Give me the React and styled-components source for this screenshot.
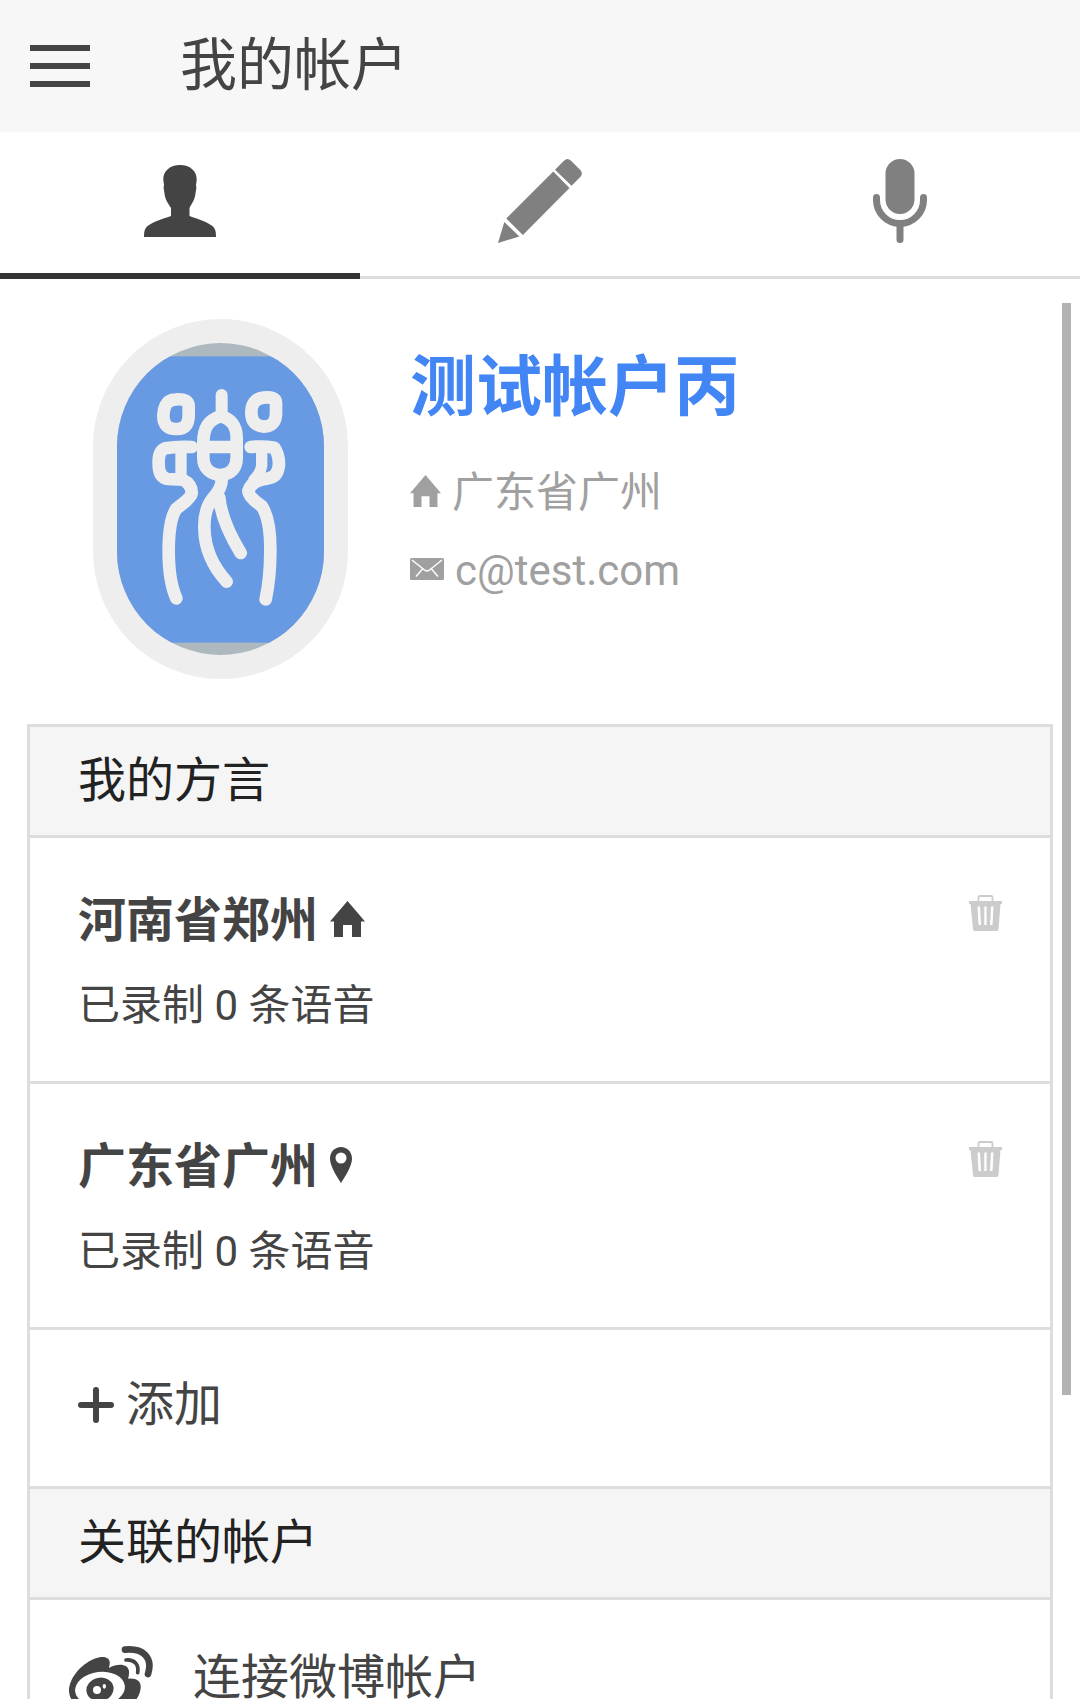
import { useState } from 'react';
import styled, { createGlobalStyle } from 'styled-components';

const dialects = [
    { id: 1, name: '河南省郑州', count: 0, type: 'home' },
    { id: 2, name: '广东省广州', count: 0, type: 'pin' },
];

export default function App(){
    const [tab, setTab] = useState('profile');

    return(
        <>
            <GlobalStyle />
            <Page>
                <Header>
                    <MenuButton aria-label="菜单">
                        <Bar />
                        <Bar />
                        <Bar />
                    </MenuButton>
                    <PageTitle>我的帐户</PageTitle>
                </Header>
                <Tabs>
                    <Tab aria-label="帐户" $active={tab === 'profile'} onClick={() => setTab('profile')}><PersonIcon /></Tab>
                    <Tab aria-label="编辑" $active={tab === 'edit'} onClick={() => setTab('edit')}><PencilIcon /></Tab>
                    <Tab aria-label="录音" $active={tab === 'record'} onClick={() => setTab('record')}><MicIcon /></Tab>
                </Tabs>
                <Content>
                    <Profile>
                        <Avatar><AvatarDrawing /></Avatar>
                        <Info>
                            <UserName>测试帐户丙</UserName>
                            <Detail><HomeIcon width="31" height="32" />广东省广州</Detail>
                            <Detail><MailIcon />c@test.com</Detail>
                        </Info>
                    </Profile>
                    <List>
                        <SectionTitle>我的方言</SectionTitle>
                        {dialects.map(dialect => <Dialect key={dialect.id} {...dialect} />)}
                        <AddButton><PlusIcon />添加</AddButton>
                        <SectionTitle>关联的帐户</SectionTitle>
                        <AccountLink href="#weibo"><WeiboIcon />连接微博帐户</AccountLink>
                    </List>
                    <ScrollThumb />
                </Content>
            </Page>
        </>
    )
}

function Dialect({ name, count, type }){
    return(
        <Item>
            <div>
                <ItemTitle>{name}{type === 'home' ? <HomeIcon width="35" height="36" /> : <PinIcon />}</ItemTitle>
                <ItemText>已录制 {count} 条语音</ItemText>
            </div>
            <DeleteButton aria-label="删除"><TrashIcon /></DeleteButton>
        </Item>
    )
}

function PersonIcon(){
    return(
        <svg width="72" height="72" viewBox="0 0 72 72" fill="currentColor">
            <path d="M36 0C46 0 53 6 52.700 15L52 20Q53 23 51.700 27C51 35 48 38 45.500 43V51C54 54 64 57 69 61.500C71.500 64 72 67 72 72H0C0 67 .5 64 3 61.500C8 57 18 54 27 51V43C24 38 21 35 20.300 27Q19 23 20 20L19.300 15C19 6 26 0 36 0Z" />
        </svg>
    )
}

function PencilIcon(){
    return(
        <svg width="84" height="84" viewBox="0 0 84 84" fill="currentColor">
            <path d="M0 84L6.300 63L21.300 77.500ZM8.300 59.500L55.300 12.500L71.500 29L24.900 76ZM57 10.700L66 1.700Q69.500-1.500 73 1.700L82.300 11Q85.500 14.500 82.300 18L73.500 26.800Z" />
        </svg>
    )
}

function MicIcon(){
    return(
        <svg width="54" height="84" viewBox="0 0 54 84">
            <rect x="12.500" width="29" height="55" rx="14.500" fill="currentColor" />
            <path d="M3.500 38.500V41C3.500 54 14 64.500 27 64.500S50.500 54 50.500 41V38.500M27 65V80.500" fill="none" stroke="currentColor" strokeWidth="7" strokeLinecap="round" />
        </svg>
    )
}

function HomeIcon(props){
    return(
        <svg viewBox="0 0 35 36" fill="currentColor" {...props}>
            <path d="M17.500 0L35 20.500H31V36H22V24H13V36H4V20.500H0Z" />
        </svg>
    )
}

function PinIcon(){
    return(
        <svg width="22" height="36" viewBox="0 0 22 36" fill="currentColor">
            <path fillRule="evenodd" d="M11 0C4.800 0 0 5 0 11.500C0 19 6.500 29 11 36C15.500 29 22 19 22 11.500C22 5 17.200 0 11 0ZM11 5.500A5.500 5.500 0 1 1 11 16.500A5.500 5.500 0 1 1 11 5.500Z" />
        </svg>
    )
}

function MailIcon(){
    return(
        <svg width="34" height="22" viewBox="0 0 34 22">
            <rect width="34" height="22" rx="1.500" fill="currentColor" />
            <path d="M2 2L14.500 12Q17 14 19.500 12L32 2M6 18.500L12.500 11M28 18.500L21.500 11" fill="none" stroke="#fff" strokeWidth="1.500" />
        </svg>
    )
}

function TrashIcon(){
    return(
        <svg width="33" height="36" viewBox="0 0 33 36" fill="currentColor">
            <path d="M9.500 6.500V2.500Q9.500 1 11 1H22Q23.500 1 23.500 2.500V6.500" fill="none" stroke="currentColor" strokeWidth="1.800" />
            <path fillRule="evenodd" d="M0 6H33V9H31.500L29.500 34Q29.300 36 28 36H5.500Q4.200 36 4 34L1.500 9H0ZM8.500 11.500L9.500 30H12L11 11.500ZM15.300 11.500V30H17.600V11.500ZM22 11.500L21 30H23.500L24.500 11.500Z" />
        </svg>
    )
}

function PlusIcon(){
    return(
        <svg width="36" height="36" viewBox="0 0 36 36">
            <path d="M18 3V33M3 18H33" stroke="currentColor" strokeWidth="6" strokeLinecap="round" />
        </svg>
    )
}

function WeiboIcon(){
    return(
        <svg width="84" height="84" viewBox="29 2 252 252" fill="currentColor">
            <path d="M29 165C30 130 62 88 105 70C137 58 154 68 151 86L149 98C175 83 207 85 209 108Q210 120 206 130C232 127 246 138 244 158C240 202 195 232 130 232C70 232 29 205 29 165Z" />
            <ellipse cx="122" cy="160" rx="75" ry="50" fill="#fff" transform="rotate(-7 122 160)" />
            <ellipse cx="122" cy="162" rx="41" ry="35" transform="rotate(-12 122 162)" />
            <circle cx="113" cy="164" r="12" fill="#fff" />
            <ellipse cx="135" cy="153" rx="5" ry="7" fill="#fff" />
            <path d="M197 43C250 38 282 65 266 116" fill="none" stroke="currentColor" strokeWidth="20" strokeLinecap="round" />
            <path d="M200 74C226 72 239 88 235 112" fill="none" stroke="currentColor" strokeWidth="11" strokeLinecap="round" />
        </svg>
    )
}

function AvatarDrawing(){
    return(
        <svg viewBox="111 126 621 936" width="207" height="312">
            <rect x="111" y="126" width="621" height="936" fill="#adb8bf" />
            <rect x="111" y="166" width="621" height="859" fill="#689ae4" />
            <g fill="none" stroke="#eee" strokeWidth="38" strokeLinecap="round" strokeLinejoin="round">
                <path d="M288 295Q326 292 326 315V345Q325 384 292 384Q250 386 250 345Q252 295 288 295Z" />
                <path d="M550 290Q588 286 588 305V340Q586 376 552 377Q514 374 514 335Q514 294 550 290Z" />
                <path strokeWidth="36" d="M425 282V345" />
                <path d="M421 346C385 358 370 380 370 425V470C370 500 390 520 421 522C455 520 470 500 470 470V410C470 375 452 352 421 346ZM385 438H455" />
                <path d="M335 438Q290 436 255 442Q234 450 236 490Q236 532 265 534L308 536Q336 550 335 577Q333 592 290 622Q266 655 266 750Q266 840 289 892" />
                <path strokeWidth="34" d="M303 448V525" />
                <path d="M512 438Q550 434 583 440Q597 460 597 490Q594 528 565 532Q515 536 505 570Q505 588 545 615Q572 655 571 750Q571 830 557 895" />
                <path strokeWidth="34" d="M545 445V495Q540 520 522 536" />
                <path d="M425 530Q428 560 398 592Q372 625 373 680Q374 770 440 842M418 590Q424 660 482 756" />
            </g>
        </svg>
    )
}

const GlobalStyle = createGlobalStyle`
    * {
        box-sizing: border-box;
    }

    body {
        margin: 0;
        background-color: #ffffff;
        color: #444444;
        font-family: Roboto, "Noto Sans CJK SC", sans-serif;
    }

    button {
        padding: 0;
        border: none;
        background: none;
        color: inherit;
        font: inherit;
        cursor: pointer;
    }

    svg {
        flex-shrink: 0;
    }
`

const Page = styled.div`
    height: 100vh;
    display: flex;
    flex-direction: column;
    overflow: hidden;
`

const Header = styled.header`
    flex-shrink: 0;
    height: 132px;
    padding: 0 30px;
    display: flex;
    align-items: center;
    gap: 90px;
    background-color: #f7f7f7;
`

const MenuButton = styled.button`
    width: 60px;
    display: flex;
    flex-direction: column;
    gap: 12px;
`

const Bar = styled.span`
    width: 100%;
    height: 6px;
    background-color: #444444;
`

const PageTitle = styled.h1`
    margin: 0;
    font-size: 57px;
    font-weight: 400;
    line-height: 72px;
`

const Tabs = styled.nav`
    flex-shrink: 0;
    height: 147px;
    display: flex;
    box-shadow: inset 0 -3px #dddddd;
`

const Tab = styled.button`
    flex: 1;
    display: flex;
    align-items: center;
    justify-content: center;
    padding-bottom: 9px;
    color: ${props => props.$active ? '#444444' : '#808080'};
    box-shadow: ${props => props.$active ? 'inset 0 -6px #333333' : 'none'};
`

const Content = styled.main`
    position: relative;
    flex: 1;
    min-height: 0;
    padding: 40px 27px 0;
    overflow: hidden;
`

const Profile = styled.section`
    display: flex;
    gap: 62px;
    padding: 0 66px 45px;
`

const Avatar = styled.div`
    flex-shrink: 0;
    width: 255px;
    height: 360px;
    border: 24px solid #eeeeee;
    border-radius: 128px;
    overflow: hidden;

    svg {
        display: block;
    }
`

const Info = styled.div`
    padding-top: 30px;
`

const UserName = styled.h2`
    margin: 0 0 36px;
    color: #4285f4;
    font-size: 66px;
    font-weight: 700;
    line-height: 78px;
`

const Detail = styled.p`
    margin: 0 0 18px;
    display: flex;
    align-items: center;
    gap: 11px;
    color: #a0a0a0;
    font-size: 42px;
    line-height: 60px;

    svg {
        margin-bottom: 4px;
    }
`

const List = styled.section`
    border: 3px solid #dddddd;
`

const SectionTitle = styled.h3`
    margin: 0;
    padding: 18px 48px;
    border-bottom: 3px solid #dddddd;
    background-color: #f5f5f5;
    color: #222222;
    font-size: 48px;
    font-weight: 400;
    line-height: 72px;
`

const Item = styled.article`
    display: flex;
    align-items: flex-start;
    justify-content: space-between;
    padding: 50px 48px 42px;
    border-bottom: 3px solid #dddddd;
`

const ItemTitle = styled.h4`
    margin: 0 0 19px;
    display: flex;
    align-items: center;
    gap: 12px;
    font-size: 48px;
    font-weight: 700;
    line-height: 66px;

    svg {
        margin-bottom: 4px;
    }
`

const ItemText = styled.p`
    margin: 0;
    font-size: 42px;
    line-height: 66px;
`

const DeleteButton = styled.button`
    padding-top: 7px;
    color: #cccccc;

    svg {
        display: block;
    }
`

const AddButton = styled.button`
    width: 100%;
    height: 159px;
    padding: 0 48px 6px;
    display: flex;
    align-items: center;
    gap: 12px;
    border-bottom: 3px solid #dddddd;
    font-size: 48px;
    line-height: 72px;
`

const AccountLink = styled.a`
    padding: 36px 39px;
    display: flex;
    align-items: center;
    gap: 40px;
    color: #444444;
    font-size: 48px;
    line-height: 72px;
    text-decoration: none;
`

const ScrollThumb = styled.div`
    position: absolute;
    top: 24px;
    right: 9px;
    width: 9px;
    height: 1092px;
    background-color: #b3b3b3;
`
